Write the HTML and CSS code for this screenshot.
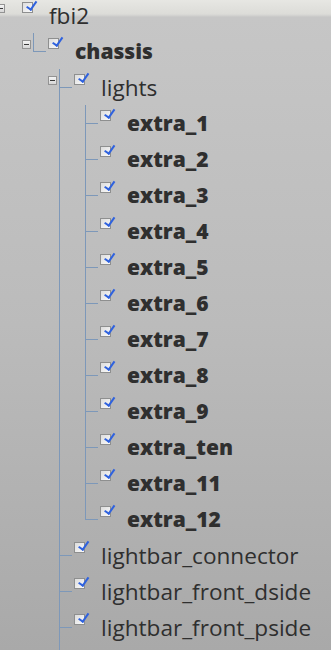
FILE: index.html
```html
<!DOCTYPE html>
<html>
	<head>
		<meta charset="utf-8">
		<title>tree</title>
		<link rel="stylesheet" href="styles.css">
	</head>
	<body>
		<ul class="tree">
			<li class="node">
				<div class="row"><span class="exp"></span><span class="chk"></span><span class="label">fbi2</span></div>
				<ul>
					<li class="node">
						<div class="row"><span class="exp"></span><span class="chk"></span><span class="label bold">chassis</span></div>
						<ul>
							<li class="node">
								<div class="row"><span class="exp"></span><span class="chk"></span><span class="label">lights</span></div>
								<ul>
									<li><div class="row"><span class="chk"></span><span class="label bold">extra_1</span></div></li>
									<li><div class="row"><span class="chk"></span><span class="label bold">extra_2</span></div></li>
									<li><div class="row"><span class="chk"></span><span class="label bold">extra_3</span></div></li>
									<li><div class="row"><span class="chk"></span><span class="label bold">extra_4</span></div></li>
									<li><div class="row"><span class="chk"></span><span class="label bold">extra_5</span></div></li>
									<li><div class="row"><span class="chk"></span><span class="label bold">extra_6</span></div></li>
									<li><div class="row"><span class="chk"></span><span class="label bold">extra_7</span></div></li>
									<li><div class="row"><span class="chk"></span><span class="label bold">extra_8</span></div></li>
									<li><div class="row"><span class="chk"></span><span class="label bold">extra_9</span></div></li>
									<li><div class="row"><span class="chk"></span><span class="label bold">extra_ten</span></div></li>
									<li><div class="row"><span class="chk"></span><span class="label bold">extra_11</span></div></li>
									<li><div class="row"><span class="chk"></span><span class="label bold">extra_12</span></div></li>
								</ul>
							</li>
							<li><div class="row"><span class="chk"></span><span class="label">lightbar_connector</span></div></li>
							<li><div class="row"><span class="chk"></span><span class="label">lightbar_front_dside</span></div></li>
							<li class="more"><div class="row"><span class="chk"></span><span class="label">lightbar_front_pside</span></div></li>
						</ul>
					</li>
				</ul>
			</li>
		</ul>
	</body>
</html>
```

FILE: styles.css
```css
*{
	margin: 0;
	padding: 0;
	list-style: none;
	box-sizing: border-box;
}
html,body{
	height: 100%;
	overflow: hidden;
}
body{
	font-family: "Open Sans", "Noto Sans", sans-serif;
	color: #2f2f2f;
	background: linear-gradient(#e7e7e3 0, #dcdcd8 14px, #cfcfcd 16px, #c6c6c6 17px, #bbbbbb 50%, #a9a9a9 100%);
}
.tree{
	margin-top: -3px;
}
.tree li{
	position: relative;
}
.tree ul{
	padding-left: 26px;
}
.row{
	height: 36px;
	display: flex;
	align-items: flex-start;
	position: relative;
}
/* connector from parent line */
.tree ul li::before{
	content: "";
	position: absolute;
	left: 7px;
	top: 0;
	width: 12px;
	height: 18px;
	border-left: 1px solid #7d98b9;
	border-bottom: 1px solid #7d98b9;
}
.tree ul li:not(:last-child)::after,
.tree ul li.more::after{
	content: "";
	position: absolute;
	left: 7px;
	top: 0;
	bottom: 0;
	border-left: 1px solid #7d98b9;
}
.tree ul li.more::after{
	bottom: -10px;
}
.exp{
	position: absolute;
	left: -4px;
	top: 7px;
	width: 9px;
	height: 9px;
	border: 1px solid #939393;
	background: linear-gradient(#f4f4f4, #d6d6d6);
}
.exp::after{
	content: "";
	position: absolute;
	left: 1px;
	top: 3px;
	width: 5px;
	height: 1px;
	background: #3a3a3a;
}
.chk{
	position: relative;
	margin: 5px 0 0 22px;
	width: 11px;
	height: 11px;
	flex: none;
	border: 1px solid #8e8f8f;
	background: linear-gradient(135deg, #dcdcdc, #fbfbfb);
}
.chk::after{
	content: "";
	position: absolute;
	left: 2px;
	top: -3px;
	width: 4px;
	height: 9px;
	border-right: 2px solid #2f62de;
	border-bottom: 2px solid #2f62de;
	transform: rotate(35deg);
	transform-origin: 100% 100%;
}
.label{
	margin-left: 16px;
	font-size: 22.6px;
	line-height: 37px;
	white-space: nowrap;
}
.bold{
	font-size: 21px;
	font-weight: 800;
}
```
